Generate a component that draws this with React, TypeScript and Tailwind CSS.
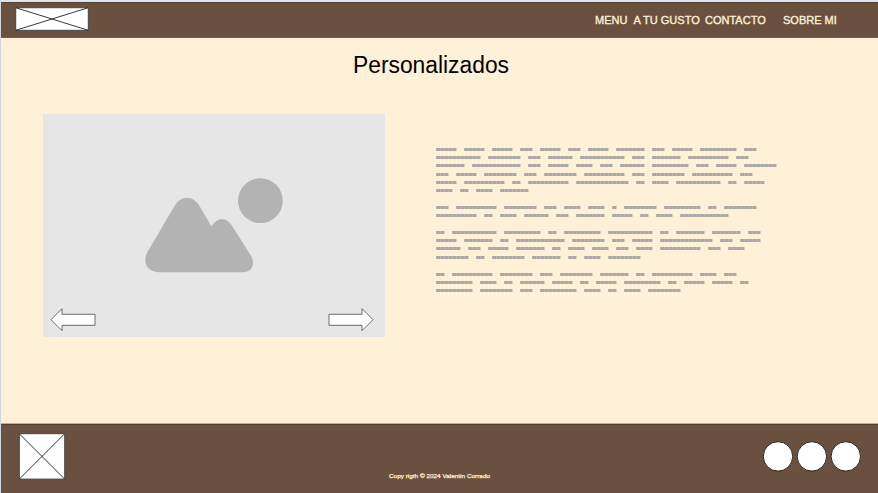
const paragraphs: number[][][] = [
  [
    [5, 5, 5, 3, 5, 3, 5, 7, 3, 5, 9, 3],
    [11, 8, 3, 6, 11, 3, 7, 10, 3],
    [7, 12, 3, 5, 4, 3, 6, 9, 3, 5, 8],
    [3, 5, 8, 3, 8, 10, 3, 8, 10, 3],
    [5, 10, 2, 10, 13, 2, 4, 11, 2, 5],
    [4, 2, 4, 7],
  ],
  [
    [3, 10, 8, 3, 4, 4, 1, 8, 9, 2, 8],
    [10, 2, 4, 6, 3, 7, 5, 2, 4, 12],
  ],
  [
    [2, 11, 9, 2, 9, 11, 2, 7, 7, 3],
    [5, 7, 2, 12, 8, 3, 5, 13, 3, 5],
    [6, 3, 5, 7, 2, 4, 4, 3, 4, 10, 3, 4],
    [8, 2, 8, 7, 2, 4, 8],
  ],
  [
    [2, 10, 8, 3, 8, 7, 2, 10, 4, 3],
    [9, 4, 2, 6, 5, 2, 5, 9, 2, 5, 5, 2],
    [9, 8, 3, 9, 4, 2, 4, 8],
  ],
];

function Header() {
  return (
    <header className="flex h-[36px] shrink-0 items-start border-y border-t-[#544034] border-b-[#735c4b] bg-[#6a503f] pl-[14px]">
      <svg className="mt-[4px] h-[24px] w-[74px]" viewBox="0 0 74 24">
        <rect x="0.7" y="0.7" width="72.6" height="22.6" fill="#fff" stroke="#4a4540" />
        <path d="M0.7 0.7L73.3 23.3M73.3 0.7L0.7 23.3" stroke="#222" strokeWidth="0.9" />
      </svg>
      <nav className="ml-[506px] flex pt-[9px] text-[11px] leading-[16px] whitespace-nowrap text-[#fff0d8] [-webkit-text-stroke:0.35px_#fff0d8]">
        <a className="w-[38.500px]">MENU</a>
        <a className="w-[71.500px]">A TU GUSTO</a>
        <a className="w-[78px]">CONTACTO</a>
        <a>SOBRE MI</a>
      </nav>
    </header>
  );
}

function Arrow({ flip = false }: { flip?: boolean }) {
  return (
    <svg className={flip ? "h-[24px] w-[46px] -scale-x-100" : "h-[24px] w-[46px]"} viewBox="0 0 46 24">
      <path d="M1 11.700L12 0.700V6.300H45V17.300H12V22.700Z" fill="#fff" stroke="#5c5c5c" strokeWidth="0.9" />
    </svg>
  );
}

function Carousel() {
  return (
    <section className="flex h-[222.500px] w-[342.500px] flex-col bg-[#e6e6e6]">
      <svg className="mt-[63px] ml-[101.500px] h-[97px] w-[140px] shrink-0" viewBox="144 177 140 97" fill="#b3b3b3">
        <circle cx="260.4" cy="200.7" r="22.4" />
        <path d="M160 272.3C147 272.3 142 262 147.500 252L174.500 206C181 195 193 195 199.500 206L211.500 226.500C217 217 226 217 231.500 225L250.500 255C256 264 252 272.300 243 272.300Z" />
      </svg>
      <div className="mt-[34px] flex justify-between pr-[11px] pl-[7.500px]">
        <Arrow />
        <Arrow flip />
      </div>
    </section>
  );
}

function Description() {
  return (
    <section className="mt-[34px] ml-[51px] flex flex-col gap-[9px]">
      {paragraphs.map((lines, p) => (
        <div key={p}>
          {lines.map((words, l) => (
            <div key={l} className={l === 3 ? "mt-px flex h-[8px] gap-[8px]" : "flex h-[8px] gap-[8px]"}>
              {words.map((n, w) => (
                <span
                  key={w}
                  className="h-[3px] shrink-0 bg-[repeating-linear-gradient(90deg,#b9b3a9_0_1px,#a9a9a9_1px_4px)] shadow-[1px_0_0_#d8d2bd]"
                  style={{ width: n * 4 }}
                />
              ))}
            </div>
          ))}
        </div>
      ))}
    </section>
  );
}

function Footer() {
  return (
    <footer className="flex h-[70px] shrink-0 border-t border-[#c2b09a] bg-[#6a503f] pl-[17px] shadow-[inset_0_1px_0_#523d31]">
      <svg className="mt-[9px] h-[47px] w-[48px]" viewBox="0 0 48 47">
        <rect x="1.3" y="0.7" width="45.4" height="45.4" fill="#fff" stroke="#4a4540" />
        <path d="M1.300 0.700L46.700 46.100M46.700 0.700L1.300 46.100" stroke="#333" strokeWidth="1" />
      </svg>
      <svg className="mt-[47px] ml-[323px] h-[10px] w-[102px] overflow-visible">
        <text x="0" y="7" textLength="101" lengthAdjust="spacingAndGlyphs" fill="#fff0d8" stroke="#fff0d8" strokeWidth="0.25" fontSize="6.2" fontFamily="'Liberation Sans', Arial, sans-serif">
          Copy rigth © 2024 Valentin Corrado
        </text>
      </svg>
      <svg className="mt-[16px] ml-[271px] h-[32px] w-[100px]" viewBox="762 440 100 32" fill="#fff" stroke="#2e2621" strokeWidth="1">
        <circle cx="778" cy="456.400" r="14.700" />
        <circle cx="811.900" cy="456.400" r="14.700" />
        <circle cx="845.800" cy="456.400" r="14.700" />
      </svg>
    </footer>
  );
}

export default function App() {
  return (
    <div className="flex h-[493px] w-[878px] flex-col overflow-hidden border-t-2 border-l border-t-[#dfe3ea] border-l-[#d2d7dc] bg-[#fff0d8] font-['Liberation_Sans',Arial,sans-serif]">
      <Header />
      <main className="flex flex-1 flex-col">
        <h1 className="ml-[352px] h-[76px] pt-[13px]">
          <svg className="h-[30px] w-[158px] overflow-visible">
            <text x="0" y="22" textLength="156" lengthAdjust="spacingAndGlyphs" fill="#000" fontSize="23.5" fontFamily="'Liberation Sans', Arial, sans-serif">
              Personalizados
            </text>
          </svg>
        </h1>
        <div className="flex items-start pl-[41.500px]">
          <Carousel />
          <Description />
        </div>
      </main>
      <Footer />
    </div>
  );
}
